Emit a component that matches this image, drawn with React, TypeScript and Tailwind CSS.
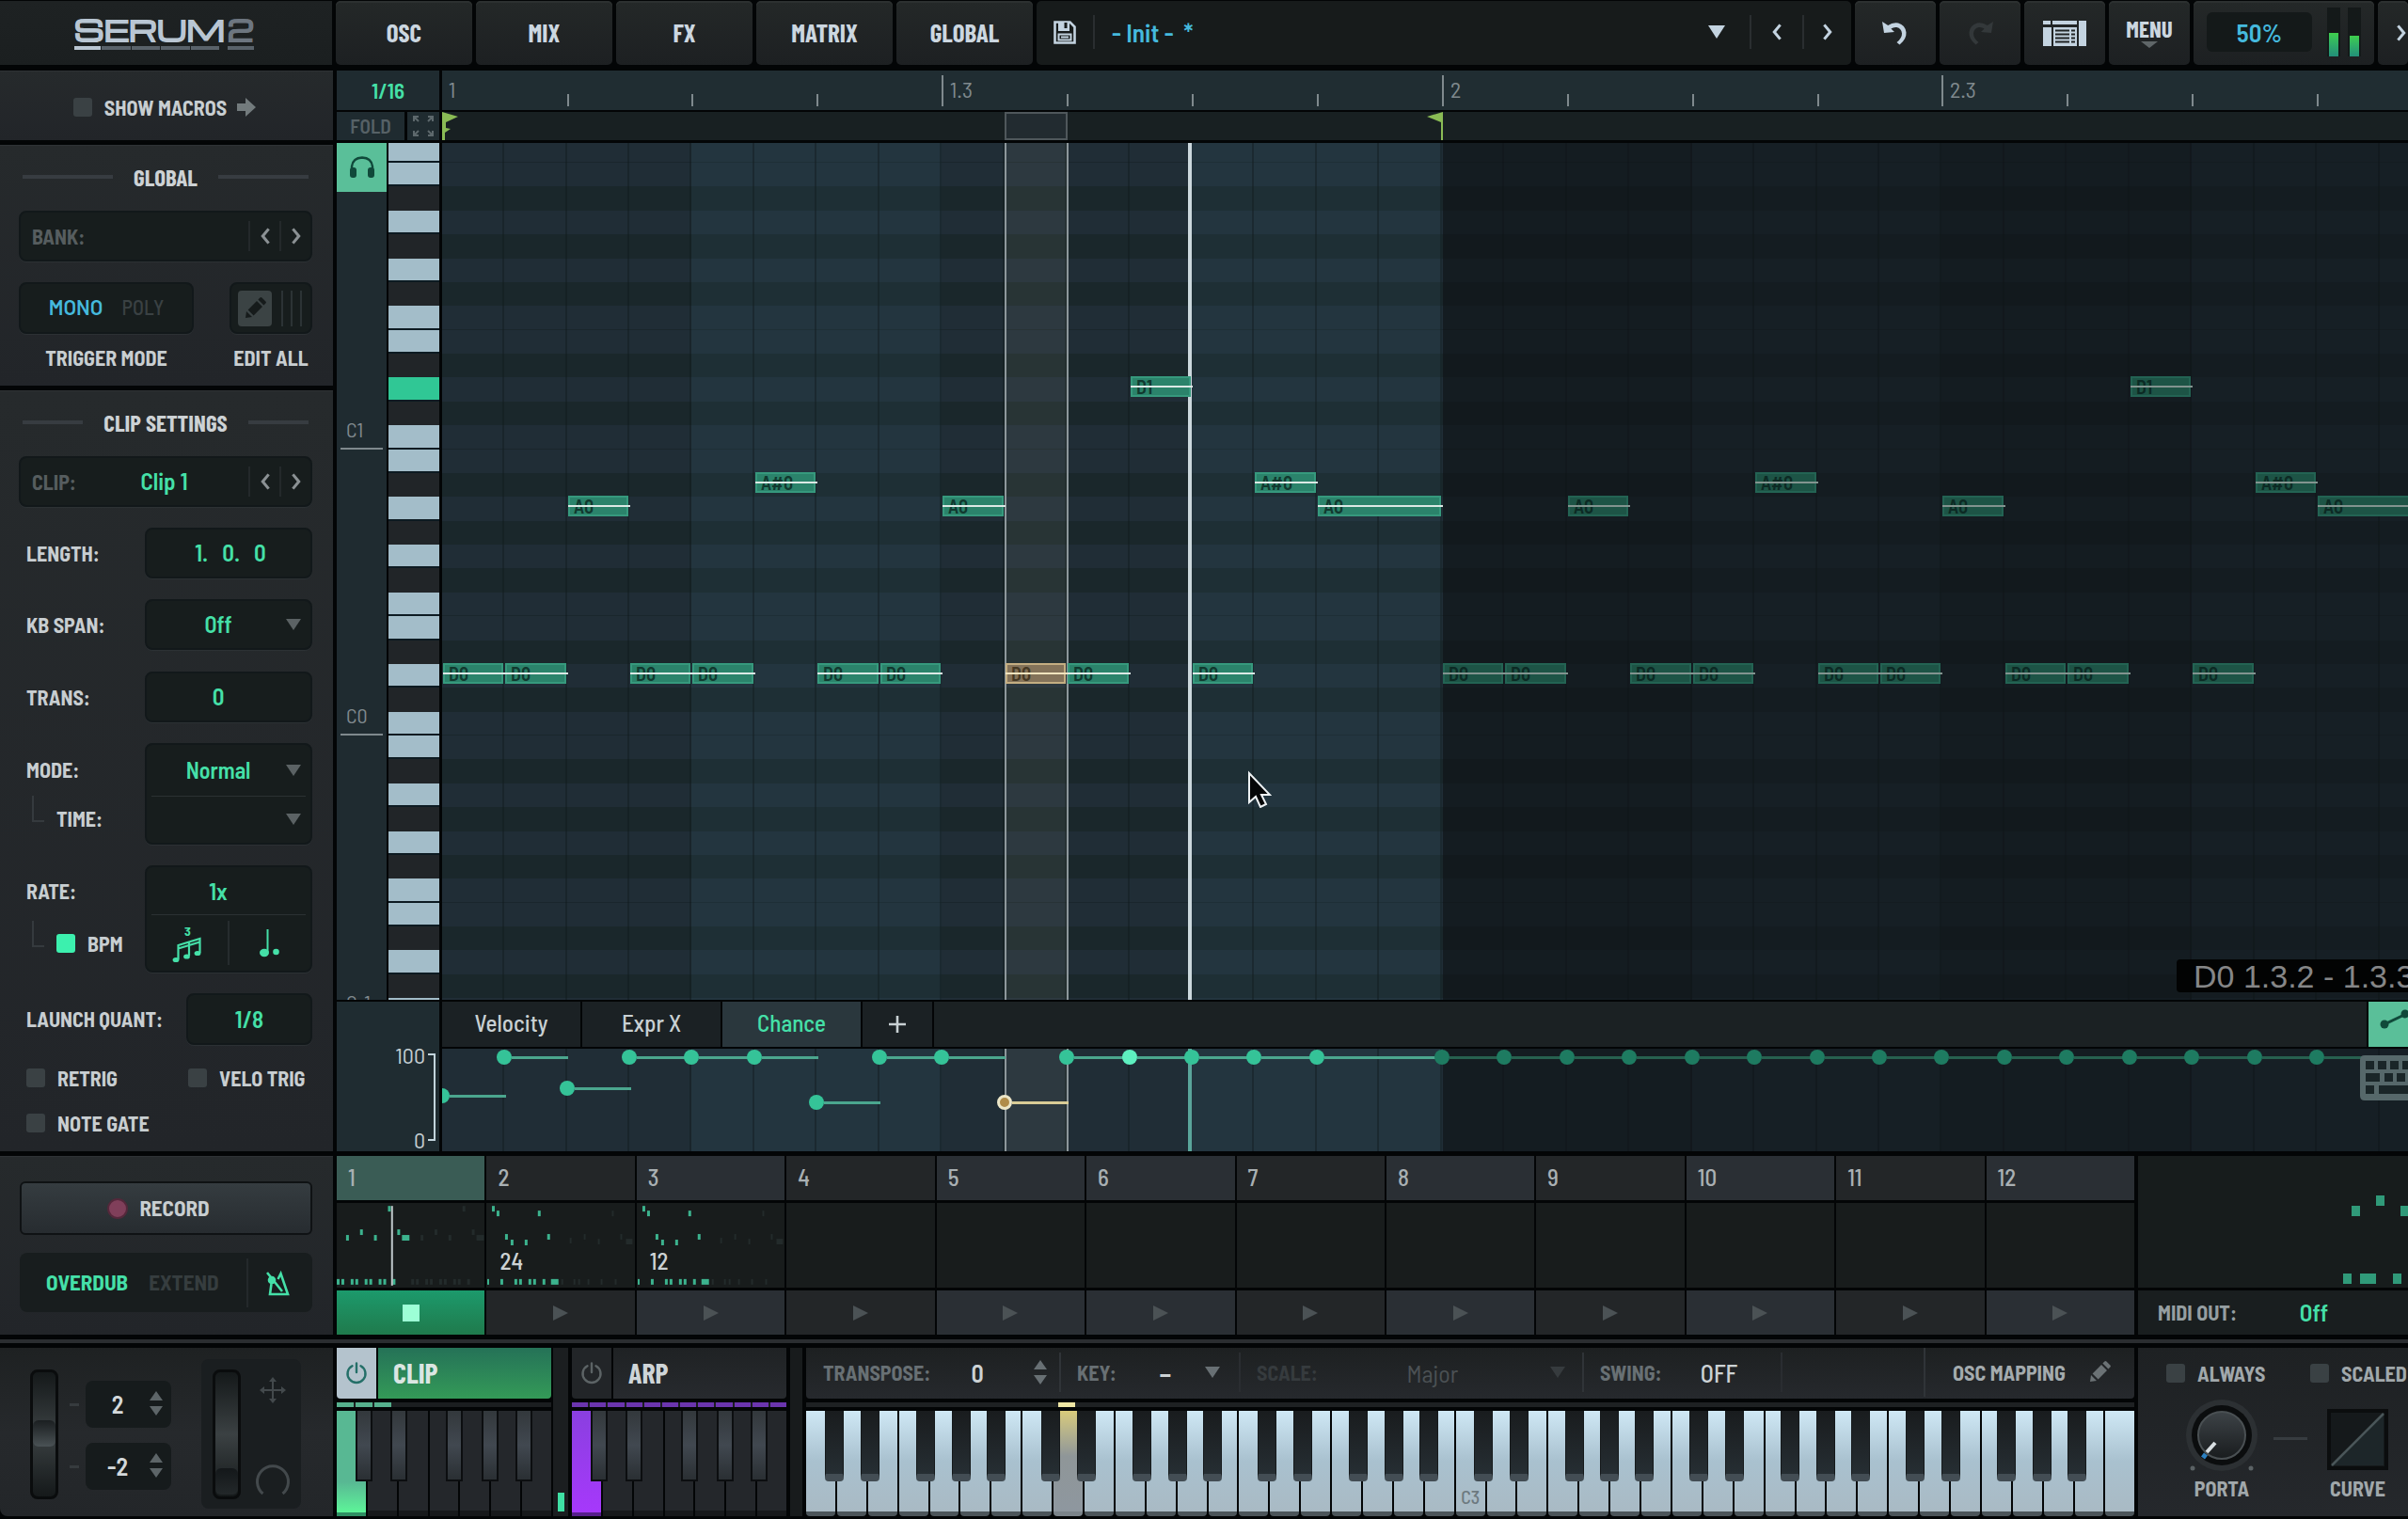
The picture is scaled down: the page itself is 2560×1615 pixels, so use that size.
import React from "react";
import { clsx } from "clsx";

/* ---------- pattern data ---------- */

type Note = { step: number; len: number; row: number; name: string; selected?: boolean };

const PATTERN: Note[] = [
  ...[0, 1, 3, 4, 6, 7, 9, 10, 12].map((step) => ({ step, len: 1, row: 22, name: "D0", selected: step === 9 })),
  { step: 2, len: 1, row: 15, name: "A0" },
  { step: 8, len: 1, row: 15, name: "A0" },
  { step: 14, len: 2, row: 15, name: "A0" },
  { step: 5, len: 1, row: 14, name: "A#0" },
  { step: 13, len: 1, row: 14, name: "A#0" },
  { step: 11, len: 1, row: 10, name: "D1" },
];

const CHANCE: { step: number; len: number; y: number; kind?: "selected" | "hot" }[] = [
  { step: 0, len: 1, y: 50 },
  { step: 1, len: 1, y: 9 },
  { step: 2, len: 1, y: 42 },
  { step: 3, len: 1, y: 9 },
  { step: 4, len: 1, y: 9 },
  { step: 5, len: 1, y: 9 },
  { step: 6, len: 1, y: 57 },
  { step: 7, len: 1, y: 9 },
  { step: 8, len: 1, y: 9 },
  { step: 9, len: 1, y: 57, kind: "selected" },
  { step: 10, len: 1, y: 9 },
  { step: 11, len: 1, y: 9, kind: "hot" },
  { step: 12, len: 1, y: 9 },
  { step: 13, len: 1, y: 9 },
  { step: 14, len: 2, y: 9 },
];

const stepX = (s: number) => Math.round(s * 66.45 + 0.6);
const rowTop = (i: number) => (i === 0 ? 0 : Math.round(21 + ((i - 1) * 203) / 8));
const ROWS = Array.from({ length: 37 }, (_, i) => i);
const BLACK = [2, 4, 6, 9, 11];
const isBlack = (i: number) => BLACK.includes(i % 12);

/* ---------- small parts ---------- */

const NARROW = "font-['Barlow_Condensed','Roboto_Condensed',sans-serif] font-bold";

function Chevron({ dir, className = "" }: { dir: "left" | "right"; className?: string }) {
  return (
    <svg viewBox="0 0 12 20" className={clsx("h-[18px] w-[12px]", className)} fill="none" stroke="currentColor" strokeWidth="3.4" aria-hidden="true">
      <path d={dir === "left" ? "M10 1.5 3 10l7 8.5" : "M2 1.5 9 10l-7 8.5"} />
    </svg>
  );
}

function Down({ className = "" }: { className?: string }) {
  return (
    <svg viewBox="0 0 16 12" className={clsx("h-3 w-4", className)} fill="currentColor" aria-hidden="true">
      <path d="M0 0h16L8 12z" />
    </svg>
  );
}

function Spinner({ className = "" }: { className?: string }) {
  return (
    <svg viewBox="0 0 14 26" className={clsx("h-[26px] w-[14px]", className)} fill="currentColor" aria-hidden="true">
      <path d="M7 0l7 10H0zM7 26l7-10H0z" />
    </svg>
  );
}

function Pencil({ className = "" }: { className?: string }) {
  return (
    <svg viewBox="0 0 24 24" className={className} fill="currentColor" aria-hidden="true">
      <path d="M2 22l1-7 6 6zM4.6 13.4 14 4l6 6-9.400 9.400zM15.400 2.600l2-2q1-1 2 0l4 4q1 1 0 2l-2 2z" />
    </svg>
  );
}

function Power({ className = "" }: { className?: string }) {
  return (
    <svg viewBox="0 0 24 24" className={className} fill="none" stroke="currentColor" strokeWidth="2.4" strokeLinecap="round" aria-hidden="true">
      <path d="M7.500 4.200a9.500 9.500 0 1 0 9 0M12 1.500v9.500" />
    </svg>
  );
}

function Check({ id, label, checked = false, className = "", boxClass = "size-5" }: { id: string; label: string; checked?: boolean; className?: string; boxClass?: string }) {
  return (
    <div className={clsx("flex items-center", className)}>
      <input id={id} type="checkbox" defaultChecked={checked} className={clsx("shrink-0 appearance-none rounded-[3px] bg-[#3a4144] checked:bg-[#3cf0ae]", boxClass)} />
      <label htmlFor={id} className="ml-[13px] whitespace-nowrap">
        {label}
      </label>
    </div>
  );
}

function Title({ children }: { children: React.ReactNode }) {
  return (
    <h2 className={clsx(NARROW, "flex h-8 items-center justify-between px-1 text-[25px] leading-8 text-[#cdd2d5]")}>
      <span className="h-1 flex-1 bg-[#373c41]" />
      <span className="whitespace-nowrap px-[22px]">{children}</span>
      <span className="h-1 flex-1 bg-[#373c41]" />
    </h2>
  );
}

const BOX = "rounded-lg border-2 border-[#12181a] bg-[#171d1d] shadow-[0_1px_0_#2c3134]";

function Pager() {
  return (
    <div className="flex h-8 text-[#8b9194]">
      <button aria-label="Previous" className="flex w-[33px] items-center justify-center border-l-2 border-[#24292b]">
        <Chevron dir="left" />
      </button>
      <button aria-label="Next" className="flex w-[33px] items-center justify-center border-l-2 border-[#24292b]">
        <Chevron dir="right" />
      </button>
    </div>
  );
}

function Picker({ id, value, className = "" }: { id: string; value: string; className?: string }) {
  return (
    <div className={clsx("relative flex items-center", className)}>
      <select id={id} defaultValue={value} className="h-full w-full appearance-none bg-transparent pl-2 pr-[30px] text-center text-[24px] font-semibold text-[#45e0a8] outline-none [text-align-last:center]">
        <option>{value}</option>
      </select>
      <Down className="pointer-events-none absolute right-[10px] text-[#5b6264]" />
    </div>
  );
}

function ValueInput({ id, value, className = "" }: { id: string; value: string; className?: string }) {
  return <input id={id} defaultValue={value} className={clsx("min-w-0 bg-transparent text-center text-[25px] font-semibold text-[#45e0a8] outline-none", className)} />;
}

/* ---------- header ---------- */

const TAB = "flex items-center justify-center rounded-[5px] bg-gradient-to-b from-[#242828] to-[#1d2022] shadow-[inset_0_2px_0_#2c3030]";

function Header() {
  return (
    <header className="flex h-[69px] gap-1 pt-px">
      <div className="flex w-[353px] flex-col items-center justify-center bg-gradient-to-b from-[#1e2223] to-[#1b1f20] pr-1">
        <div className="flex w-[191px] items-end justify-between font-['Michroma','Orbitron','DejaVu_Sans',sans-serif] text-[30px] font-extrabold leading-7 text-[#b9c6d3] [-webkit-text-stroke:1px_currentColor]">
          <span>SERUM</span>
          <span className="text-[#6d7680]">2</span>
        </div>
        <div className="mt-1 flex w-[191px] gap-px">
          <span className="h-1 w-7 bg-[#b9c6d3]" />
          <span className="h-1 flex-1 bg-[#59626a]" />
          <span className="h-1 flex-1 bg-[#59626a]" />
          <span className="h-1 flex-1 bg-[#59626a]" />
          <span className="mr-2 h-1 flex-1 bg-[#59626a]" />
          <span className="h-1 w-7 bg-[#59626a]" />
        </div>
      </div>
      <nav className="flex gap-1 text-[27px] text-[#ccd7e0]">
        {["OSC", "MIX", "FX", "MATRIX", "GLOBAL"].map((t) => (
          <button key={t} className={clsx(TAB, NARROW, "w-[145px] pb-[2px]")}>
            {t}
          </button>
        ))}
      </nav>
      <div className="flex min-w-0 flex-1 items-center rounded-[5px] bg-[#171b1b] pb-[2px]">
        <button aria-label="Save preset" className="ml-[18px] text-[#c3d3e0]">
          <svg viewBox="0 0 24 25" className="h-[25px] w-6" aria-hidden="true">
            <path fill="none" stroke="currentColor" strokeWidth="2.600" d="M1.500 1.500h16l5 5v17h-21z" />
            <path fill="currentColor" d="M5 2h12v9H5z" />
            <path fill="#171b1b" d="M11.500 2h3v6h-3z" />
            <path fill="none" stroke="currentColor" strokeWidth="2" d="M5.500 14.500h13v6h-13zM8 17.500h8" />
          </svg>
        </button>
        <span className="ml-[18px] h-9 w-[2px] bg-[#2a2e30]" />
        <span className="ml-[18px] whitespace-pre text-[27px] font-semibold text-[#45b9dd]">{"- Init -  *"}</span>
        <button aria-label="Preset list" className="ml-auto mr-[26px] text-[#c3d3e0]">
          <svg viewBox="0 0 18 14" className="h-[14px] w-[18px]" fill="currentColor" aria-hidden="true">
            <path d="M0 0h18L9 14z" />
          </svg>
        </button>
        <button aria-label="Previous preset" className="flex h-9 w-14 items-center justify-center border-l-2 border-[#2a2e30] text-[#c3d3e0]">
          <Chevron dir="left" />
        </button>
        <button aria-label="Next preset" className="flex h-9 w-[52px] items-center justify-center border-l-2 border-[#2a2e30] text-[#c3d3e0]">
          <Chevron dir="right" />
        </button>
      </div>
      <button aria-label="Undo" className={clsx(TAB, "w-[86px] text-[#c3d3e0]")}>
        <svg viewBox="0 0 28 26" className="h-[26px] w-7" aria-hidden="true">
          <path fill="currentColor" d="M0 1l2 12 11-1-3.600-3.400q2.600-2 6-1.600 5 1 5.600 6.500.200 5-5.500 9.500l3 2.500q7.500-6 7-13-1-8-8.500-10-6-1-10.800 2.600z" />
        </svg>
      </button>
      <button aria-label="Redo" className={clsx(TAB, "w-[86px] text-[#33383a]")}>
        <svg viewBox="0 0 28 26" className="h-[26px] w-7 -scale-x-100" aria-hidden="true">
          <path fill="currentColor" d="M0 1l2 12 11-1-3.600-3.400q2.600-2 6-1.600 5 1 5.600 6.500.200 5-5.500 9.500l3 2.500q7.500-6 7-13-1-8-8.500-10-6-1-10.800 2.600z" />
        </svg>
      </button>
      <button aria-label="Browser" className={clsx(TAB, "w-[86px] text-[#c3d3e0]")}>
        <svg viewBox="0 0 46 27" className="h-[27px] w-[46px]" fill="currentColor" aria-hidden="true">
          <path d="M0 0h8v4H0zM10 0h26v4H10zM38 0h8v27h-8zM0 7h9v20H0z" />
          <path fillRule="evenodd" d="M11 7h25v20H11zM13 9.500h15v2H13zM13 13.500h15v2H13zM13 17.500h15v2H13zM13 21.500h15v2H13zM30 9.500h4v2h-4zM30 13.500h4v2h-4zM30 17.500h4v2h-4zM30 21.500h4v2h-4z" />
        </svg>
      </button>
      <button className={clsx(TAB, NARROW, "w-[86px] flex-col pb-1 text-[25px] leading-7 text-[#ccd7e0]")}>
        MENU
        <svg viewBox="0 0 18 7" className="h-[7px] w-[18px]" fill="#5f6668" aria-hidden="true">
          <path d="M0 0h18L9 7z" />
        </svg>
      </button>
      <div className={clsx(TAB, "w-[192px] gap-4 pb-[2px]")}>
        <input aria-label="Master volume" defaultValue="50%" className="h-[42px] w-[112px] rounded-md bg-[#141919] text-center text-[27px] font-semibold text-[#45b9dd] outline-none" />
        <div className="flex h-[52px] gap-2">
          {["h-[25px]", "h-[22px]"].map((h) => (
            <div key={h} className="flex w-[14px] flex-col justify-end bg-[#141919] px-[2px]">
              <span className={clsx("bg-gradient-to-b from-[#3fce4b] to-[#238f78]", h)} />
            </div>
          ))}
        </div>
      </div>
      <button aria-label="Next page" className={clsx(TAB, "w-8 overflow-hidden pl-[18px] text-[#c3d3e0]")}>
        <Chevron dir="right" className="h-6 shrink-0" />
      </button>
    </header>
  );
}

/* ---------- sidebar ---------- */

const PANEL = "bg-gradient-to-b from-[#262a2c] to-[#222529] shadow-[inset_0_1px_0_#2e3235]";

function Sub() {
  return <span className="-mt-5 ml-[6px] mr-[13px] h-7 w-[13px] border-b-2 border-l-2 border-[#353a3e]" />;
}

function Sidebar() {
  return (
    <aside className="flex w-[354px] shrink-0 flex-col gap-[5px] text-[22px] font-bold text-[#c8ced1]">
      <div className={clsx(PANEL, "flex h-[74px] items-center justify-center pr-1 pt-1")}>
        <Check id="macros" label="SHOW MACROS" />
        <svg viewBox="0 0 20 20" className="ml-[11px] size-5" fill="#737b7d" aria-hidden="true">
          <path d="M0 6h9V0l11 10L9 20v-6H0z" />
        </svg>
      </div>

      <section className={clsx(PANEL, "flex h-[256px] flex-col px-5 pr-[22px] pt-[18px]")}>
        <Title>GLOBAL</Title>
        <div className={clsx(BOX, "mt-5 flex h-[54px] items-center justify-between")}>
          <span className="pl-3 text-[#565d5f]">BANK:</span>
          <Pager />
        </div>
        <div className="mt-[22px] flex justify-between">
          <div className="flex w-[186px] flex-col items-center gap-[9px]">
            <div className={clsx(BOX, "flex h-[55px] w-full items-center justify-center gap-5 pb-[2px]")}>
              <button className="font-['Barlow','Roboto',sans-serif] font-semibold text-[#45b9dd]">MONO</button>
              <button className="font-medium text-[#3a4143]">POLY</button>
            </div>
            <span>TRIGGER MODE</span>
          </div>
          <div className="flex w-[88px] flex-col items-center gap-[9px]">
            <button aria-label="Edit all" className={clsx(BOX, "flex h-[55px] w-full items-center gap-1 px-[7px]")}>
              <span className="flex h-[38px] w-9 items-center justify-center rounded bg-[#3b4344]">
                <Pencil className="size-6 text-[#161b1b]" />
              </span>
              <span className="h-[38px] w-2 border-r-2 border-[#2c3335]" />
              <span className="h-[38px] w-[6px] border-r-2 border-[#2c3335]" />
              <span className="h-[38px] w-[6px] border-r-2 border-[#2c3335]" />
            </button>
            <span className="whitespace-nowrap">EDIT ALL</span>
          </div>
        </div>
      </section>

      <section className={clsx(PANEL, "flex h-[809px] flex-col gap-[22px] pl-5 pr-[22px] pt-[18px]")}>
        <div className="-mb-[2px]">
          <Title>CLIP SETTINGS</Title>
        </div>
        <div className={clsx(BOX, "flex h-[54px] items-center")}>
          <label htmlFor="clip" className="pl-3 text-[#565d5f]">
            CLIP:
          </label>
          <ValueInput id="clip" value="Clip 1" className="flex-1 pl-1" />
          <Pager />
        </div>
        <div className="flex h-[54px] items-center justify-between pl-2">
          <label htmlFor="length">LENGTH:</label>
          <div className={clsx(BOX, "flex h-full w-[178px]")}>
            <ValueInput id="length" value="1.   0.   0" className="w-full pl-1" />
          </div>
        </div>
        <div className="flex h-[54px] items-center justify-between pl-2">
          <label htmlFor="kbspan">KB SPAN:</label>
          <Picker id="kbspan" value="Off" className={clsx(BOX, "h-full w-[178px]")} />
        </div>
        <div className="mt-px flex h-[54px] items-center justify-between pl-2">
          <label htmlFor="trans">TRANS:</label>
          <div className={clsx(BOX, "flex h-full w-[178px]")}>
            <ValueInput id="trans" value="0" className="w-full pr-[22px]" />
          </div>
        </div>
        <div className="flex h-[108px] justify-between pl-2">
          <div className="flex flex-col">
            <label htmlFor="mode" className="flex h-[56px] items-center">
              MODE:
            </label>
            <div className="flex h-12 items-center">
              <Sub />
              <label htmlFor="time">TIME:</label>
            </div>
          </div>
          <div className={clsx(BOX, "flex w-[178px] flex-col")}>
            <Picker id="mode" value="Normal" className="h-[54px]" />
            <span className="mx-[5px] h-px bg-[#2b3133]" />
            <Picker id="time" value="" className="h-12" />
          </div>
        </div>
        <div className="flex h-[114px] justify-between pl-2">
          <div className="flex flex-col">
            <label htmlFor="rate" className="flex h-[54px] items-center">
              RATE:
            </label>
            <div className="flex h-[58px] items-center">
              <Sub />
              <Check id="bpm" label="BPM" checked />
            </div>
          </div>
          <div className={clsx(BOX, "flex w-[178px] flex-col")}>
            <ValueInput id="rate" value="1x" className="h-[50px] w-full pr-[22px]" />
            <span className="mx-[5px] h-px bg-[#2b3133]" />
            <div className="flex flex-1 text-[#45e0a8]">
              <button aria-label="Triplet" className="flex flex-1 items-center justify-center">
                <svg viewBox="0 0 32 46" className="h-[46px] w-8" aria-hidden="true">
                  <text x="13" y="15" fontSize="14" fill="currentColor">
                    3
                  </text>
                  <path fill="none" stroke="currentColor" strokeWidth="2.200" d="M6.500 40V25l23-7v15M18 36V21.500M6.500 28.500l23-7" />
                  <ellipse cx="4" cy="40.500" rx="3.400" ry="2.600" fill="currentColor" />
                  <ellipse cx="15.500" cy="37" rx="3.400" ry="2.600" fill="currentColor" />
                  <ellipse cx="27" cy="33.500" rx="3.400" ry="2.600" fill="currentColor" />
                </svg>
              </button>
              <span className="my-[6px] w-[2px] bg-[#262c2e]" />
              <button aria-label="Dotted" className="flex flex-1 items-center justify-center">
                <svg viewBox="0 0 22 30" className="h-[30px] w-[22px]" fill="currentColor" aria-hidden="true">
                  <path d="M7.500 0h2v24h-2z" />
                  <ellipse cx="5" cy="25" rx="5" ry="4.200" />
                  <circle cx="17.500" cy="24" r="3.300" />
                </svg>
              </button>
            </div>
          </div>
        </div>
        <div className="flex h-[55px] items-center justify-between pl-2">
          <label htmlFor="quant">LAUNCH QUANT:</label>
          <div className={clsx(BOX, "flex h-full w-[134px]")}>
            <ValueInput id="quant" value="1/8" className="w-full" />
          </div>
        </div>
        <div className="-mt-[3px] grid grid-cols-[172px_1fr] gap-y-4 pl-2">
          <Check id="retrig" label="RETRIG" className="h-8" />
          <Check id="velotrig" label="VELO TRIG" className="h-8" />
          <Check id="notegate" label="NOTE GATE" className="h-8" />
        </div>
      </section>

      <section className={clsx(PANEL, "flex h-[190px] flex-col gap-[19px] pl-[21px] pr-[22px] pt-[27px]")}>
        <button className="flex h-[57px] items-center justify-center gap-3 rounded-md border-2 border-[#0f1214] bg-gradient-to-b from-[#353c40] to-[#272c30] pr-4 text-[23px]">
          <span className="size-[22px] rounded-full border-2 border-[#54283b] bg-[#803f5a]" />
          RECORD
        </button>
        <div className="flex h-[63px] items-center rounded-lg bg-[#181d1e] text-[23px]">
          <button className="ml-7 text-[#45e0a8]">OVERDUB</button>
          <button className="ml-[22px] text-[#363d3f]">EXTEND</button>
          <span className="ml-auto h-[52px] w-[2px] bg-[#24292b]" />
          <button aria-label="Metronome" className="flex w-[68px] justify-center pr-1 text-[#45e0a8]">
            <svg viewBox="0 0 26 28" className="h-7 w-[26px]" fill="none" stroke="currentColor" strokeWidth="2.600" aria-hidden="true">
              <path d="M5.500 15 4 26h19L15.500 4l-3 6M1 3l16 20" />
              <circle cx="6" cy="11" r="3" fill="currentColor" />
            </svg>
          </button>
        </div>
      </section>
    </aside>
  );
}

/* ---------- piano roll ---------- */

function GridColumns() {
  return (
    <div className="pointer-events-none absolute inset-0 flex">
      {Array.from({ length: 32 }, (_, s) => (
        <span
          key={s}
          style={{ width: stepX(s + 1) - stepX(s) }}
          className={clsx("shrink-0 border-r-2 border-[#10191c]/40", Math.floor(s / 4) % 2 === 1 && "bg-[#406a78]/13")}
        />
      ))}
    </div>
  );
}

function Overlays({ playhead }: { playhead: string }) {
  return (
    <>
      <div className="absolute inset-y-0 right-0 bg-[#0d1114]/60" style={{ left: stepX(16) }} />
      <div className="absolute inset-y-0 border-x-2 border-[#8d979b] bg-[#e4e4cc]/7" style={{ left: stepX(9) - 1, width: stepX(1) + 1 }} />
      <div className={clsx("absolute inset-y-0 w-1", playhead)} style={{ left: stepX(12) - 5 }} />
    </>
  );
}

function Ruler() {
  return (
    <div className="flex h-[42px] overflow-hidden bg-[#202d32] text-[24px] leading-8 text-[#7f898d]">
      {Array.from({ length: 16 }, (_, i) => {
        const major = i % 4 === 0;
        return (
          <div key={i} style={{ width: stepX(2 * i + 2) - stepX(2 * i) }} className="flex shrink-0 items-end pb-1">
            {i > 0 && <span className={clsx("w-[2px] bg-[#7f898d]", major ? "h-[33px]" : "h-[13px]")} />}
            {major && <span className="pb-[2px] pl-[7px]">{["1", "1.3", "2", "2.3"][i / 4]}</span>}
          </div>
        );
      })}
    </div>
  );
}

function PianoRoll() {
  const notes = [0, 16].flatMap((o) => PATTERN.map((n) => ({ ...n, step: n.step + o, dim: o > 0, selected: n.selected && o === 0 })));
  return (
    <div className="relative h-[911px] min-w-0 flex-1 overflow-hidden">
      {ROWS.map((i) => (
        <div
          key={i}
          style={{ height: rowTop(i + 1) - rowTop(i) }}
          className={clsx(isBlack(i) ? "bg-[#1a272b]" : "bg-[#202d36]", (i % 12 === 0 || i % 12 === 7) && "border-b border-[#1a262c]")}
        />
      ))}
      <GridColumns />
      <Overlays playhead="bg-[#ccd8dd]" />
      {notes.map((n) => (
        <div
          key={`${n.step}-${n.row}`}
          style={{ left: stepX(n.step), top: rowTop(n.row) - 1, width: stepX(n.step + n.len) - stepX(n.step) }}
          className="absolute h-[22px] pr-[2px]"
        >
          <div
            className={clsx(
              "h-full border-2 pl-1 text-[20px] font-semibold leading-[18px]",
              n.selected
                ? "border-[#c4ae82] bg-[#84735a] text-[#463923]"
                : n.dim
                  ? "border-[#236353] bg-[#1d5446] text-[#0c2a24]"
                  : "border-[#36997d] bg-[#2b836b] text-[#11392f]",
            )}
          >
            {n.name}
          </div>
          <span className={clsx("absolute inset-x-0 top-[10px] h-[2px]", n.dim ? "bg-[#82948f]" : n.selected ? "bg-[#f0e3bd]" : "bg-[#dbe9e5]")} />
        </div>
      ))}
      <svg viewBox="0 0 26 40" className="absolute left-[856px] top-[667px] h-10 w-[26px]" aria-hidden="true">
        <path d="M2 3v31l7-6 5 11 6-3-5-10h9z" fill="#050607" stroke="#eef2f4" strokeWidth="2" />
      </svg>
      <div className="absolute bottom-2 right-0 flex h-[35px] w-[246px] items-center overflow-hidden whitespace-nowrap rounded-l bg-[#020303] pl-[18px] font-['Liberation_Sans',Arial,sans-serif] text-[34px] leading-none text-[#858687]">
        D0 1.3.2 - 1.3.3
      </div>
    </div>
  );
}

function ChanceLane() {
  const points = [
    ...CHANCE.map((c) => ({ ...c, dim: false })),
    ...Array.from({ length: 15 }, (_, i) => ({ step: 16 + i, len: i === 14 ? 2 : 1, y: 9, kind: undefined, dim: true })),
  ];
  return (
    <div className="relative h-[109px] overflow-hidden bg-[#202d36]">
      <GridColumns />
      <Overlays playhead="bg-[#5aa59b]" />
      {points.map((p) => {
        const sel = p.kind === "selected";
        return (
          <div key={p.step} className="absolute flex h-4 items-center" style={{ left: stepX(p.step) - 9, top: p.y - 8, width: stepX(p.len) + 9 }}>
            <span
              className={clsx(
                "size-4 shrink-0 rounded-full",
                sel ? "border-[3px] border-[#ece6c8] bg-[#b08c4a]" : p.dim ? "bg-[#1e7b61]" : p.kind === "hot" ? "bg-[#5ef0c0]" : "bg-[#35c398]",
              )}
            />
            <span className={clsx("h-[3px] flex-1", sel ? "bg-[#d9cc96]" : p.dim ? "bg-[#27604f]" : "bg-[#4ba68e]")} />
          </div>
        );
      })}
      <svg viewBox="0 0 51 48" className="absolute right-0 top-[7px] h-12 w-[51px]" aria-hidden="true">
        <path d="M51 0H5Q0 0 0 5v38q0 5 5 5h46z" fill="#56686a" />
        <path fill="#1a2628" d="M6 6h9v9H6zM19 6h9v9h-9zM32 6h9v9h-9zM45 6h6v9h-6zM6 19h15v9H6zM26 19h9v9h-9zM39 19h9v9h-9zM6 32h9v9H6zM20 32h31v9H20z" />
      </svg>
    </div>
  );
}

function Sequencer() {
  return (
    <section className="flex min-w-0 flex-col gap-[2px]">
      <div className="flex gap-[3px]">
        <button className="h-[42px] w-[109px] shrink-0 bg-[#1f2b30] text-[23px] font-semibold text-[#45e0a8]">1/16</button>
        <div className="min-w-0 flex-1">
          <Ruler />
        </div>
      </div>
      <div className="mb-px flex h-[30px] gap-[3px]">
        <button className="w-[72px] shrink-0 bg-[#1f2b30] text-[21px] font-semibold leading-7 text-[#566166]">FOLD</button>
        <button aria-label="Fit view" className="flex w-[34px] shrink-0 items-center justify-center bg-[#1f2b30] text-[#5d686c]">
          <svg viewBox="0 0 24 24" className="size-6" fill="none" stroke="currentColor" strokeWidth="2" aria-hidden="true">
            <path d="M2 7V2h5M2 2l5 5M22 7V2h-5M22 2l-5 5M2 22l5-5M7 22H2v-5M22 22l-5-5M17 22h5v-5" />
          </svg>
        </button>
        <div className="relative min-w-0 flex-1 bg-[#182022]">
          <svg viewBox="0 0 18 30" className="absolute left-0 top-0 h-[30px] w-[18px]" fill="#8abb55" aria-hidden="true">
            <path d="M0 0l17 5-13 6v6l5 1-6 4v8H0z" />
          </svg>
          <div className="absolute inset-y-0 border-2 border-[#4f575b] bg-[#222b30]" style={{ left: stepX(9) - 1, width: stepX(1) }} />
          <svg viewBox="0 0 18 30" className="absolute top-0 h-[30px] w-[18px]" fill="#8abb55" style={{ left: stepX(16) - 18 }} aria-hidden="true">
            <path d="M18 0v30h-2V11L1 5z" />
          </svg>
        </div>
      </div>
      <div className="flex">
        <div className="relative h-[911px] w-[53px] shrink-0 overflow-hidden bg-[#1f2b30] text-[22px] leading-6 text-[#7f898d]">
          <button aria-label="Audition notes" className="flex h-[52px] w-full items-center justify-center bg-[#5abf99] text-[#10493a]">
            <svg viewBox="0 0 28 24" className="h-6 w-7" aria-hidden="true">
              <path d="M3 15v-4q1-9 11-9.500Q24 2 25 11v4" fill="none" stroke="currentColor" strokeWidth="2.400" />
              <rect x="1" y="12" width="7" height="11" rx="3" fill="currentColor" />
              <rect x="20" y="12" width="7" height="11" rx="3" fill="currentColor" />
            </svg>
          </button>
          {["C1", "C0", "C-1"].map((c, i) => (
            <div key={c} className="absolute left-1 w-[45px] border-b-2 border-[#7f898d] pb-2 pl-[6px]" style={{ top: rowTop(13 + 12 * i) - 34 }}>
              {c}
            </div>
          ))}
        </div>
        <div className="ml-[2px] h-[911px] w-[54px] shrink-0 overflow-hidden">
          {ROWS.map((i) => (
            <div
              key={i}
              style={{ height: rowTop(i + 1) - rowTop(i) }}
              className={clsx(i === 10 ? "bg-[#30c795]" : isBlack(i) ? "bg-[#212528]" : "bg-[#a3bdc9]", !isBlack(i) && "border-b-2 border-[#0d1b22]")}
            />
          ))}
        </div>
        <div className="ml-[3px] flex min-w-0 flex-1">
          <PianoRoll />
        </div>
      </div>
      <div className="flex gap-[3px]">
        <div className="flex w-[109px] shrink-0 items-end justify-end gap-[3px] bg-[#1f2c31] pr-1 text-[24px] text-[#c2ccd0]">
          <div className="flex h-[114px] flex-col items-end justify-between leading-6">
            <span>100</span>
            <span>0</span>
          </div>
          <div className="mb-[11px] h-[93px] w-2 border-2 border-l-0 border-[#c2d4dc]" />
        </div>
        <div className="flex min-w-0 flex-1 flex-col gap-[2px]">
          <div className="flex h-12 gap-[2px] text-[25px] font-medium text-[#c8d0d3]">
            <button className="w-[147px] bg-[#1b2124] pb-[2px]">Velocity</button>
            <button className="w-[147px] bg-[#1b2124] pb-[2px]">Expr X</button>
            <button className="w-[147px] bg-[#2a373d] pb-[2px] text-[#45e0a8]">Chance</button>
            <button aria-label="Add lane" className="flex w-[74px] items-center justify-center bg-[#1b2124]">
              <svg viewBox="0 0 18 18" className="size-[18px]" stroke="currentColor" strokeWidth="2.600" aria-hidden="true">
                <path d="M9 0v18M0 9h18" />
              </svg>
            </button>
            <div className="flex-1 bg-[#1b2123]" />
            <button aria-label="Curve tool" className="w-[42px] bg-[#5abf99] text-[#10493a]">
              <svg viewBox="0 0 42 48" className="h-12 w-[42px]" aria-hidden="true">
                <path d="M17 24l23-11" stroke="currentColor" strokeWidth="3" />
                <circle cx="17" cy="24" r="4.500" fill="currentColor" />
                <circle cx="39" cy="13" r="4.500" fill="currentColor" />
              </svg>
            </button>
          </div>
          <ChanceLane />
        </div>
      </div>
    </section>
  );
}

/* ---------- clip launcher ---------- */

function MiniPattern() {
  const y: Record<number, number> = { 22: 81, 15: 34, 14: 28, 10: 3 };
  return (
    <svg viewBox="0 0 158 90" className="h-full w-full" aria-hidden="true">
      {[0, 16].map((o) =>
        PATTERN.map((n) => (
          <rect key={`${o}-${n.step}-${n.row}`} x={(n.step + o) * 4.97} y={y[n.row]} width={n.len > 1 ? 8 : 3} height="6" fill={o ? "#232b2b" : "#3cb38e"} />
        )),
      )}
      <rect x="58" y="3" width="2" height="85" fill="#bfc8ca" />
    </svg>
  );
}

const SHORT: [number, number, number][] = [
  [6, 3, 3], [11, 8, 3], [55, 8, 3], [20, 33, 3], [26, 39, 3], [41, 39, 3], [65, 33, 3],
  [1, 81, 2], [15, 81, 3], [30, 81, 3], [35, 81, 3], [45, 81, 3], [50, 81, 3], [60, 81, 3], [69, 81, 8],
];
const FAINT: [number, number, number][] = [
  [89, 37, 2], [104, 33, 2], [119, 38, 2], [143, 33, 2], [149, 38, 7], [134, 8, 2],
  [80, 81, 2], [93, 81, 2], [98, 81, 2], [108, 81, 2], [122, 81, 2], [137, 81, 2],
];

function MiniShort() {
  return (
    <svg viewBox="0 0 158 90" className="absolute inset-0 h-full w-full" aria-hidden="true">
      {SHORT.map(([x, y, w]) => (
        <rect key={`${x}-${y}`} x={x} y={y} width={w} height="6" fill="#3cb38e" />
      ))}
      {FAINT.map(([x, y, w]) => (
        <rect key={`${x}-${y}`} x={x} y={y} width={w} height="6" fill="#232b2b" />
      ))}
    </svg>
  );
}

function ClipLauncher() {
  return (
    <section className="flex h-[190px] min-w-0 gap-1">
      <div className="grid min-w-0 flex-1 grid-cols-12 gap-x-[2px]">
        {Array.from({ length: 12 }, (_, i) => {
          const tone = [2, 4, 5, 7, 9, 11].includes(i) ? "bg-[#2a2f34]" : "bg-[#232628]";
          return (
            <div key={i} className="flex flex-col gap-[3px]">
              <div className={clsx("flex h-[47px] items-center pb-[2px] pl-3 text-[25px] font-medium text-[#a9b0b3]", i === 0 ? "bg-[#3a5c55]" : tone)}>{i + 1}</div>
              <div className="relative h-[90px] bg-[#181c1c]">
                {i === 0 && <MiniPattern />}
                {(i === 1 || i === 2) && (
                  <>
                    <MiniShort />
                    <span className="absolute left-[14px] top-[45px] text-[25px] font-medium leading-8 text-[#cdd2d4]">{i === 1 ? "24" : "12"}</span>
                  </>
                )}
              </div>
              <button
                aria-label={i === 0 ? "Stop clip 1" : `Play clip ${i + 1}`}
                className={clsx("flex flex-1 items-center justify-center", i === 0 ? "bg-gradient-to-b from-[#1c9a6c] to-[#1f7a4c]" : tone)}
              >
                {i === 0 ? (
                  <span className="size-[18px] bg-[#9dffd6]" />
                ) : (
                  <svg viewBox="0 0 16 16" className="size-4" fill="#4b5255" aria-hidden="true">
                    <path d="M0 0l16 8-16 8z" />
                  </svg>
                )}
              </button>
            </div>
          );
        })}
      </div>
      <div className="flex w-[287px] shrink-0 flex-col gap-[3px]">
        <div className="h-[140px] bg-[#171c1c]">
          <svg viewBox="0 0 287 140" className="h-full w-full" fill="#309a79" aria-hidden="true">
            <path d="M218 125h9v11h-9zM236 125h17v11h-17zM271 125h9v11h-9zM227 53h9v11h-9zM253 42h9v11h-9zM279 53h8v11h-8z" />
          </svg>
        </div>
        <div className="flex flex-1 items-center bg-[#191e1f] pl-[21px] text-[22px] font-bold text-[#959ea1]">
          <label htmlFor="midiout">MIDI OUT:</label>
          <select id="midiout" defaultValue="Off" className="ml-[50px] w-16 appearance-none bg-transparent text-center text-[25px] font-semibold text-[#45e0a8] outline-none [text-align-last:center]">
            <option>Off</option>
          </select>
        </div>
      </div>
    </section>
  );
}

/* ---------- bottom section ---------- */

function Wheel({ label, notch }: { label: string; notch: string }) {
  return (
    <div className="relative h-[138px] w-[30px] shrink-0 overflow-hidden rounded-lg border-[3px] border-[#0a0c0d] bg-gradient-to-b from-[#15191a] via-[#3b4143] to-[#15191a]">
      <span className={clsx("absolute inset-x-0 h-7 rounded-md", notch)} />
      <input type="range" aria-label={label} className="absolute inset-0 opacity-0" />
    </div>
  );
}

function WheelPanel() {
  return (
    <section className="flex w-[354px] shrink-0 items-start rounded-bl-lg bg-gradient-to-b from-[#1e2122] via-[#26292c] to-[#232629] pt-3">
      <div className="ml-8 mt-[11px]">
        <Wheel label="Pitch bend" notch="top-[51px] bg-gradient-to-b from-[#1b1f21] to-[#4a5255]" />
      </div>
      <div className="ml-3 mt-[23px] flex flex-col gap-4">
        {["2", "-2"].map((v) => (
          <div key={v} className="flex h-[50px] items-center">
            <span className="mr-[7px] h-[3px] w-[10px] bg-[#363b3e]" />
            <div className="flex h-full w-[91px] items-center rounded-lg bg-[#161b1c] pb-[2px] pr-[9px]">
              <input aria-label={`Bend range ${v}`} defaultValue={v} className="w-full min-w-0 bg-transparent text-center text-[26px] font-semibold text-[#d3d8da] outline-none" />
              <Spinner className="shrink-0 text-[#5d6568]" />
            </div>
          </div>
        ))}
      </div>
      <div className="ml-8 flex h-[159px] w-[106px] rounded-lg bg-[#1a1e20] pl-3 pt-[11px]">
        <Wheel label="Modulation" notch="top-[102px] bg-gradient-to-b from-[#14181a] to-[#23282a]" />
        <div className="flex h-[142px] flex-1 flex-col items-center justify-between pl-1 text-[#43494c]">
          <svg viewBox="0 0 28 28" className="mt-2 size-7" fill="currentColor" aria-hidden="true">
            <path d="M14 0l4 5h-3v8h8v-3l5 4-5 4v-3h-8v8h3l-4 5-4-5h3v-8H5v3l-5-4 5-4v3h8V5h-3z" />
          </svg>
          <svg viewBox="0 0 38 34" className="mb-2 h-[34px] w-[38px]" fill="none" stroke="currentColor" strokeWidth="3" aria-hidden="true">
            <path d="M8.500 32a16.500 16.500 0 1 1 21 0" />
          </svg>
        </div>
      </div>
    </section>
  );
}

/* Left edges of the sharps, as a share of one octave. */
const SHARPS = [20 / 230, 58 / 230, 117 / 230, 155 / 230, 192 / 230];

function ModuleKeys({ accent }: { accent: "green" | "purple" }) {
  return (
    <div className="relative flex h-28 gap-[2px]">
      {Array.from({ length: 7 }, (_, i) => (
        <span
          key={i}
          className={clsx(
            "flex-1",
            i > 0 && "border-b-[6px] border-[#17191b] bg-[#24272b]",
            i === 0 && accent === "green" && "border-b-[4px] border-[#2f8f63] bg-gradient-to-b from-[#58b893] from-70% to-[#5df598]",
            i === 0 && accent === "purple" && "border-b-[4px] border-[#571f8c] bg-gradient-to-b from-[#8a3fe0] to-[#a638fb]",
          )}
        />
      ))}
      {SHARPS.map((l) => (
        <span key={l} style={{ left: `${l * 100}%` }} className="absolute top-0 h-[75px] w-[18px] border-2 border-t-0 border-[#0c0e10] bg-gradient-to-b from-[#33383c] via-[#414850] to-[#2a2f33]" />
      ))}
    </div>
  );
}

function Module({ name, accent }: { name: string; accent: "green" | "purple" }) {
  const on = accent === "green";
  return (
    <section className="flex w-[228px] shrink-0 flex-col">
      <div className="flex h-[54px] gap-[2px]">
        <button aria-label={`${name} power`} className={clsx("flex w-[42px] items-center justify-center rounded-bl", on ? "bg-[#b4c3cd] text-[#246f68]" : "bg-[#222528] text-[#5c6365]")}>
          <Power className="size-6" />
        </button>
        <button
          className={clsx(
            NARROW,
            "flex-1 rounded-br pb-[2px] pl-4 text-left text-[30px]",
            on ? "bg-gradient-to-b from-[#257257] to-[#349a57] text-[#dbe6e3]" : "bg-gradient-to-b from-[#1f2224] to-[#272a2e] text-[#cfd5d8]",
          )}
        >
          {name}
        </button>
      </div>
      <div className="my-1 flex h-[5px] gap-[2px] bg-[#1b1e20]">
        {Array.from({ length: on ? 3 : 12 }, (_, i) => (
          <span key={i} className={on ? "w-[18px] bg-[#56b08d]" : "flex-1 bg-[#6b35ae]"} />
        ))}
      </div>
      <ModuleKeys accent={accent} />
    </section>
  );
}

function Keyboard() {
  return (
    <div className="relative flex h-28 gap-[2px]">
      {Array.from({ length: 43 }, (_, i) => (
        <span
          key={i}
          className={clsx(
            "flex flex-1 items-end justify-center rounded-b-sm border-b-[5px] pb-1 text-[20px] font-medium leading-6 text-[#6d797f]",
            i === 8 ? "border-[#7b848a] bg-gradient-to-b from-[#d9cb7a] via-[#8f9698] via-45% to-[#8e979f]" : "border-[#4c555a] bg-gradient-to-b from-[#cfe8f5] via-[#a9c1cf] via-50% to-[#a9bac4]",
          )}
        >
          {i === 21 && "C3"}
        </span>
      ))}
      {Array.from({ length: 6 }, (_, o) =>
        SHARPS.map((l) => (
          <span
            key={`${o}-${l}`}
            style={{ left: `${((o + l) * 700) / 43}%` }}
            className="absolute top-0 h-[75px] w-5 rounded-b-sm border border-t-0 border-[#15191b] border-b-8 border-b-[#434d54] bg-gradient-to-b from-[#191c1e] to-[#262e33]"
          />
        )),
      )}
    </div>
  );
}

function PerformBar() {
  return (
    <section className="flex min-w-0 flex-1 flex-col">
      <div className="flex h-[54px] items-center rounded-b bg-gradient-to-b from-[#1d2021] to-[#26292d] pb-[2px] text-[22px] font-bold text-[#687074]">
        <div className="flex h-full w-[269px] items-center pl-[18px]">
          <label htmlFor="transpose">TRANSPOSE:</label>
          <input id="transpose" defaultValue="0" className="w-24 bg-transparent pl-1 text-center text-[26px] font-semibold text-[#ccd2d4] outline-none" />
          <Spinner className="ml-auto mr-[13px]" />
        </div>
        <div className="flex h-[42px] w-[191px] items-center border-l-2 border-[#303438] pl-[17px]">
          <label htmlFor="key">KEY:</label>
          <select id="key" defaultValue="–" className="ml-[14px] w-[76px] appearance-none bg-transparent text-center text-[30px] font-semibold leading-8 text-[#ccd2d4] outline-none [text-align-last:center]">
            <option>–</option>
          </select>
          <Down className="ml-auto mr-[20px]" />
        </div>
        <div className="flex h-[42px] w-[365px] items-center border-l-2 border-[#2a2d31] pl-[17px] text-[#363b3e]">
          <label htmlFor="scale">SCALE:</label>
          <select id="scale" defaultValue="Major" className="ml-[66px] w-[112px] appearance-none bg-transparent text-center text-[26px] font-normal text-[#4b5154] outline-none [text-align-last:center]">
            <option>Major</option>
          </select>
          <Down className="ml-auto mr-[18px]" />
        </div>
        <div className="flex h-[42px] w-[211px] items-center border-l-2 border-[#303438] pl-[17px]">
          <label htmlFor="swing">SWING:</label>
          <input id="swing" defaultValue="OFF" className="ml-[21px] w-20 bg-transparent text-center text-[26px] font-medium text-[#ccd2d4] outline-none" />
        </div>
        <div className="h-[42px] flex-1 border-l-2 border-[#2a2d31]" />
        <button className="flex h-full w-[224px] items-center border-l-2 border-[#303438] pl-[29px] text-[#a4abae]">
          OSC MAPPING
          <Pencil className="ml-auto mr-[25px] size-6 text-[#6b7275]" />
        </button>
      </div>
      <div className="my-1 flex h-[5px] bg-[#1e2123]">
        <span className="w-[19%]" />
        <span className="w-[18px] bg-[#eee6a4]" />
      </div>
      <Keyboard />
    </section>
  );
}

function Porta() {
  return (
    <section className="flex w-[287px] shrink-0 flex-col overflow-hidden bg-gradient-to-b from-[#1e2123] to-[#25282c] text-[22px] font-bold text-[#a1a8ab]">
      <div className="mt-[11px] flex h-8 items-center pl-[30px]">
        <Check id="always" label="ALWAYS" className="w-[153px]" />
        <Check id="scaled" label="SCALED" />
      </div>
      <div className="mt-3 flex items-start pl-[49px]">
        <div className="flex w-20 flex-col items-center">
          <label htmlFor="porta" className="flex flex-col items-center">
            <svg viewBox="0 0 80 80" className="size-20" aria-hidden="true">
              <defs>
                <linearGradient id="knob" x1="0" y1="0" x2="0" y2="1">
                  <stop offset="0" stopColor="#3d4347" />
                  <stop offset="1" stopColor="#191c1e" />
                </linearGradient>
              </defs>
              <circle cx="40" cy="38" r="38" fill="#2c3033" />
              <circle cx="40" cy="38" r="32" fill="#0b0d0e" />
              <circle cx="40" cy="38" r="25" fill="url(#knob)" stroke="#4a5053" strokeWidth="2" />
              <path d="M33 46 24 56" stroke="#d8dee1" strokeWidth="4" />
              <path d="M23 58l-3 4" stroke="#2d80c0" strokeWidth="5" />
              <circle cx="9" cy="73" r="2.500" fill="#5b6265" />
              <circle cx="71" cy="73" r="2.500" fill="#5b6265" />
            </svg>
            <span className="leading-7">PORTA</span>
          </label>
          <input id="porta" type="range" defaultValue={0} className="sr-only" />
        </div>
        <span className="ml-[15px] mt-10 h-[3px] w-9 shrink-0 bg-[#373c40]" />
        <button className="ml-[21px] mt-[10px] flex flex-col items-center">
          <svg viewBox="0 0 65 65" className="size-[65px]" aria-hidden="true">
            <path d="M2 2h61v61H2z" fill="#15191b" stroke="#0b0d0e" strokeWidth="4" />
            <path d="M60 5v55H5z" fill="#1d2629" />
            <path d="M5 60 60 5" stroke="#4a5659" strokeWidth="2.500" />
          </svg>
          <span className="mt-[5px] leading-7">CURVE</span>
        </button>
      </div>
    </section>
  );
}

export default function App() {
  return (
    <main className="flex min-h-screen flex-col overflow-hidden bg-[#030506] font-['Barlow_Semi_Condensed','Barlow_Condensed','Roboto_Condensed',sans-serif]">
      <Header />
      <div className="mt-[6px] flex gap-1">
        <Sidebar />
        <div className="flex min-w-0 flex-1 flex-col gap-[5px]">
          <Sequencer />
          <ClipLauncher />
        </div>
      </div>
      <div className="mb-[5px] mt-[5px] h-1 bg-[#2a2d30]" />
      <div className="flex h-[179px] gap-1">
        <WheelPanel />
        <Module name="CLIP" accent="green" />
        <div className="-ml-[2px] flex w-4 shrink-0 items-end justify-center bg-[#1b1e20] pb-[5px]">
          <span className="h-5 w-[7px] bg-[#3fe0a4]" />
        </div>
        <Module name="ARP" accent="purple" />
        <div className="w-[13px] shrink-0 bg-[#181b1c]" />
        <PerformBar />
        <Porta />
      </div>
    </main>
  );
}
